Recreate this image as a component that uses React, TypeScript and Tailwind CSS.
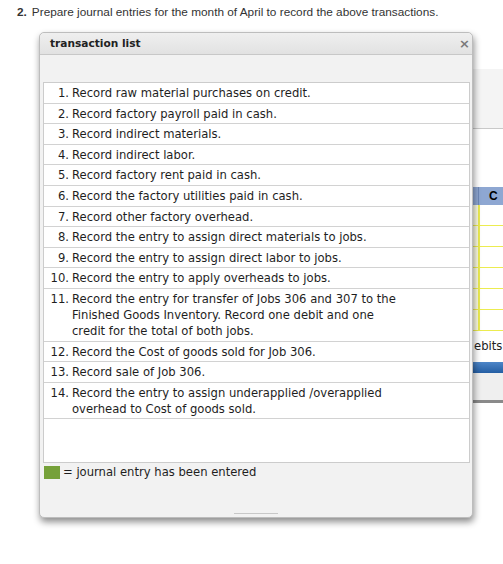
const items: { n: number; lines: string[] }[] = [
  { n: 1, lines: ["Record raw material purchases on credit."] },
  { n: 2, lines: ["Record factory payroll paid in cash."] },
  { n: 3, lines: ["Record indirect materials."] },
  { n: 4, lines: ["Record indirect labor."] },
  { n: 5, lines: ["Record factory rent paid in cash."] },
  { n: 6, lines: ["Record the factory utilities paid in cash."] },
  { n: 7, lines: ["Record other factory overhead."] },
  { n: 8, lines: ["Record the entry to assign direct materials to jobs."] },
  { n: 9, lines: ["Record the entry to assign direct labor to jobs."] },
  { n: 10, lines: ["Record the entry to apply overheads to jobs."] },
  {
    n: 11,
    lines: [
      "Record the entry for transfer of Jobs 306 and 307 to the",
      "Finished Goods Inventory. Record one debit and one",
      "credit for the total of both jobs.",
    ],
  },
  { n: 12, lines: ["Record the Cost of goods sold for Job 306."] },
  { n: 13, lines: ["Record sale of Job 306."] },
  {
    n: 14,
    lines: [
      "Record the entry to assign underapplied /overapplied",
      "overhead to Cost of goods sold.",
    ],
  },
];

function BackgroundPanel() {
  return (
    <div className="ml-[456px] mt-[50px] w-[220px]">
      <div className="h-[60px] border-b border-[#c9c9c9] bg-[#f4f4f4]" />
      <div className="h-[58px]" />
      <div className="flex h-[18px] bg-[#8ea7d2] text-[12px] font-bold text-black">
        <div className="w-[23px] border-r border-[#6f89b8]" />
        <div className="pl-[10px] leading-[18px]">C</div>
      </div>
      {[0, 1, 2, 3, 4, 5].map((i) => (
        <div key={i} className="flex h-[21px] border-b border-[#ecec50]">
          <div className="w-[23px] border-r border-[#ecec50] bg-[#fbfbe2]" />
          <div className="flex-1 border-l border-[#ecec50]" />
        </div>
      ))}
      <div className="pl-[18px] pt-[8px] text-[11.6px] leading-[14px] text-[#222] [font-family:'DejaVu_Sans',sans-serif]">
        ebits
      </div>
      <div className="mt-[9px] h-[11px] bg-gradient-to-b from-[#4d86c8] to-[#245ea3]" />
      <div className="h-[30px] border-b-[3px] border-[#8a8a8a] bg-[#efefef]" />
    </div>
  );
}

export default function App() {
  return (
    <div className="relative h-[564px] w-[503px] overflow-hidden bg-white [font-family:'Liberation_Sans',Arial,sans-serif]">
      <p className="pl-[17px] pt-[5px] text-[11.8px] leading-[14px] text-[#333]">
        <span className="font-bold">2.</span>
        <span className="pl-[5px]">
          Prepare journal entries for the month of April to record the above transactions.
        </span>
      </p>

      <BackgroundPanel />

      <div className="absolute left-[39px] top-[32px] flex h-[486px] w-[434px] flex-col rounded-[5px] border border-[#bdbdbd] bg-[#f2f2f2] shadow-[1px_4px_7px_rgba(0,0,0,0.45)] [font-family:'DejaVu_Sans',Verdana,sans-serif]">
        <div className="flex h-[22px] items-center justify-between rounded-t-[5px] border-b border-[#c8c8c8] bg-gradient-to-b from-[#efefef] to-[#e2e2e2] pl-[10px] pr-[2px]">
          <span className="text-[10.6px] font-bold text-[#222]">transaction list</span>
          <span className="text-[13px] font-bold leading-none text-[#7a7a7a]">×</span>
        </div>

        <div className="ml-[3px] mr-[2px] mt-[27px] flex h-[381px] flex-col border border-[#cccccc] bg-white">
          {items.map((item) => (
            <div
              key={item.n}
              className="flex border-b border-[#d2d2d2] pb-[1.6px] pt-[2px] text-[11.6px] leading-[16px] text-[#1e1e1e]"
            >
              <div className="w-[25px] shrink-0 text-right">{item.n}.</div>
              <div className="pl-[3px]">
                {item.lines.map((line) => (
                  <div key={line}>{line}</div>
                ))}
              </div>
            </div>
          ))}
        </div>

        <div className="ml-[4px] mt-[1px] flex items-center gap-[3px] text-[11.6px] text-[#1e1e1e]">
          <div className="h-[13px] w-[16px] bg-[#76a13a]" />
          <span>= journal entry has been entered</span>
        </div>

        <div className="mt-auto mb-[3px] flex justify-center">
          <div className="h-px w-[44px] bg-[#c8c8c8]" />
        </div>
      </div>
    </div>
  );
}
